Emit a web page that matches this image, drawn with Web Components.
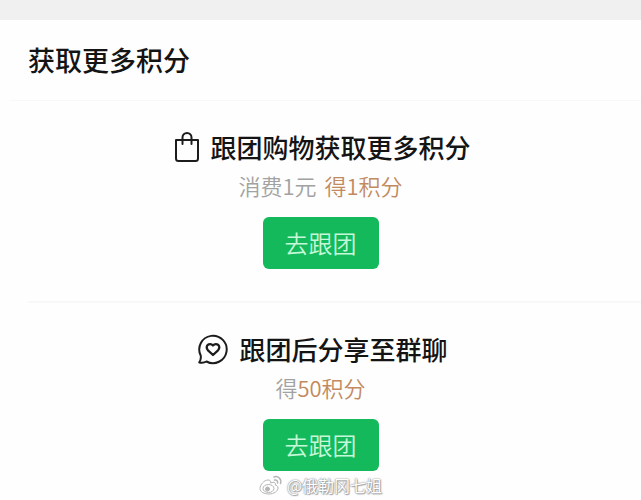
<!DOCTYPE html>
<html lang="zh-CN">
<head>
<meta charset="utf-8">
<meta name="viewport" content="width=device-width, initial-scale=1">
<title>获取更多积分</title>
<style>
  body {
    margin: 0;
    background: #fefefe;
    color: #141414;
    font-family: "Noto Sans CJK SC", sans-serif;
  }

  points-task + points-task {
    margin-left: 28px;
    padding-right: 28px;
    border-top: 2px solid #f8f8f8;
  }
</style>
</head>
<body>
<points-panel>
  <span slot="title">获取更多积分</span>
  <points-task>
    <svg slot="icon" width="26" height="32" viewBox="1 0 26 32" fill="none" stroke="#1c1c1c" stroke-width="2" stroke-linecap="round" stroke-linejoin="round" aria-hidden="true">
      <path d="M3 9h22v18.500a2.500 2.500 0 0 1-2.500 2.500h-17a2.500 2.500 0 0 1-2.500-2.500z"/>
      <path d="M9.500 13V6.500a4.500 4.500 0 0 1 9 0V13"/>
    </svg>
    <span slot="title">跟团购物获取更多积分</span>
    <span slot="note">消费1元</span>
    <span slot="reward">得1积分</span>
    <span slot="action">去跟团</span>
  </points-task>
  <points-task>
    <svg slot="icon" width="32" height="32" viewBox="0 0 32 32" fill="none" stroke="#1c1c1c" stroke-width="2" stroke-linecap="round" stroke-linejoin="round" aria-hidden="true">
      <path d="M3.700 22.500A13.700 13.700 0 1 1 9.500 28.500C7.500 29.700 4.800 30 2.200 29.500C3.500 27.500 4.200 25 3.700 22.500z"/>
      <path stroke-width="2.300" d="M16 22l-5-4.700c-3.800-4 1.600-8.700 5-4.800 3.400-3.900 8.800.800 5 4.800z"/>
    </svg>
    <span slot="title">跟团后分享至群聊</span>
    <span slot="note">得</span><span slot="reward">50积分</span>
    <span slot="action">去跟团</span>
  </points-task>
</points-panel>
<photo-credit>@俄勒冈七姐</photo-credit>

<template id="panel-template">
  <style>
    :host {
      display: block;
      border-top: 20px solid #f0f0f0;
    }

    h1 {
      margin: 0 0 0 10px;
      padding: 20px 18px;
      border-bottom: 1px solid #f8f8f8;
      font-size: 27px;
      line-height: 40px;
      font-weight: 500;
    }
  </style>
  <h1><slot name="title"></slot></h1>
  <slot></slot>
</template>

<template id="task-template">
  <style>
    :host {
      display: block;
      padding: 26px 0 32px;
    }

    section {
      display: flex;
      flex-direction: column;
      align-items: center;
    }

    header {
      display: flex;
      align-items: center;
      gap: 10px;
      padding-left: 4px;
    }

    h2 {
      margin: 0;
      font-size: 26px;
      line-height: 40px;
      font-weight: 500;
    }

    p {
      display: flex;
      margin: 0;
      color: #a2a2a2;
      font-size: 22px;
      line-height: 36px;
      font-weight: 350;
    }

    .spaced {
      gap: 8px;
    }

    .reward {
      color: #c28a60;
    }

    button {
      margin: 14px 0 0;
      padding: 8px 22px;
      border: 0;
      border-radius: 6px;
      background: #14b95c;
      color: #c5f8d8;
      font: inherit;
      font-size: 24px;
      line-height: 36px;
      font-weight: 350;
    }
  </style>
  <section>
    <header>
      <slot name="icon"></slot>
      <h2><slot name="title"></slot></h2>
    </header>
    <p><slot name="note"></slot><span class="reward"><slot name="reward"></slot></span></p>
    <button type="button"><slot name="action"></slot></button>
  </section>
</template>

<template id="credit-template">
  <style>
    :host {
      display: flex;
      position: absolute;
      top: 473px;
      left: 0;
      right: 0;
      align-items: center;
      justify-content: center;
      gap: 4px;
      color: #fff;
      font-size: 16px;
      line-height: 24px;
      text-shadow: 0 0 1px #888, 0 0 2px #999, 1px 1px 1px #aaa;
    }
  </style>
  <svg width="24" height="22" viewBox="0 0 24 22" fill="#fff" stroke="#b4b4b4" stroke-width="1" aria-hidden="true">
    <path d="M9 6C5 6 1 11 1 14.500S5 20 10 20s9-3 9-6c0-2-1.500-2.800-2.800-3 .8-2.500-1-3.500-4.500-2C12 7 11 6 9 6z"/>
    <ellipse cx="9.500" cy="14.500" rx="5.500" ry="4"/>
    <circle cx="8.500" cy="15" r="2" fill="#b4b4b4"/>
    <path fill="none" stroke-width="1.500" stroke-linecap="round" d="M15 3c4-1.500 8 2 6.500 6.500M15.500 6c2-.5 3.500 1 3 3"/>
  </svg>
  <span><slot></slot></span>
</template>

<script>
class PointsPanel extends HTMLElement {
  constructor() {
    super()
    const template = document.getElementById("panel-template")
    this.attachShadow({ mode: "open" }).append(template.content.cloneNode(true))
  }
}

class PointsTask extends HTMLElement {
  constructor() {
    super()
    const template = document.getElementById("task-template")
    this.attachShadow({ mode: "open" }).append(template.content.cloneNode(true))
  }

  connectedCallback() {
    // a condition gets a gap before its reward, a lone verb runs into it
    const note = this.querySelector('[slot="note"]')
    const line = this.shadowRoot.querySelector("p")
    line.classList.toggle("spaced", note.textContent.length > 1)
  }
}

class PhotoCredit extends HTMLElement {
  constructor() {
    super()
    const template = document.getElementById("credit-template")
    this.attachShadow({ mode: "open" }).append(template.content.cloneNode(true))
  }
}

customElements.define("points-panel", PointsPanel)
customElements.define("points-task", PointsTask)
customElements.define("photo-credit", PhotoCredit)
</script>
</body>
</html>
